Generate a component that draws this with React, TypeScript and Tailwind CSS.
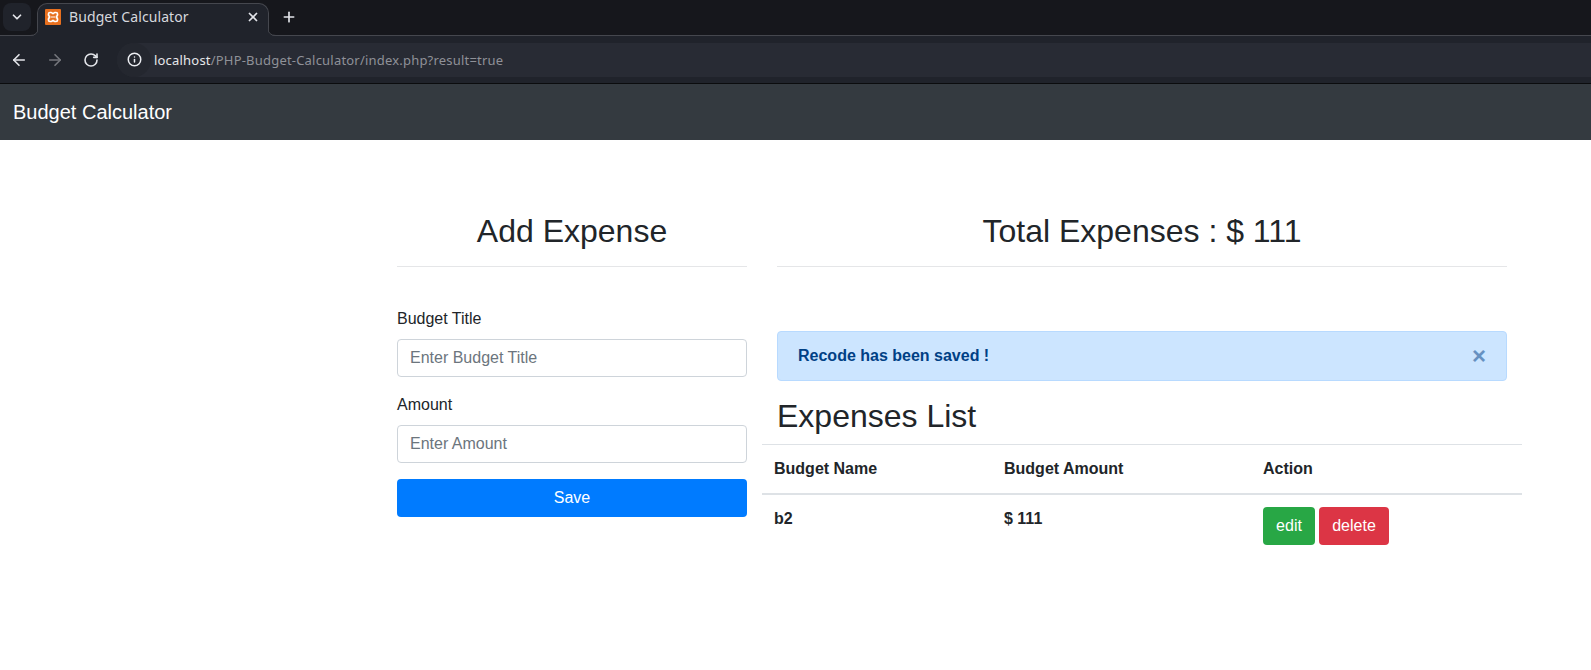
import { ArrowLeft, ArrowRight, ChevronDown, Info, Plus, RotateCw, X } from "lucide-react";

function XamppIcon() {
  return (
    <svg width="16" height="16" viewBox="0 0 16 16">
      <rect width="16" height="16" rx="1" fill="#e8701f" />
      <path
        d="M5 3.500h1.200c.7 0 1.100.5 1.300 1h1c.2-.5.6-1 1.300-1H11c.9 0 1.500.6 1.500 1.500v1c0 .7-.5 1.200-1 1.400v1.200c.5.2 1 .7 1 1.400v1c0 .9-.6 1.500-1.500 1.500H9.800c-.7 0-1.100-.5-1.300-1h-1c-.2.500-.6 1-1.300 1H5c-.9 0-1.500-.6-1.500-1.500v-1c0-.7.500-1.200 1-1.400V7.400c-.5-.2-1-.7-1-1.400V5c0-.9.600-1.500 1.500-1.500z"
        fill="none"
        stroke="#fff"
        strokeWidth="1.700"
      />
      <path d="M6 7.500h4v1H6z" fill="#fff" />
    </svg>
  );
}

// concave corners at the foot of the active tab
function TabFlare({ side }: { side: "left" | "right" }) {
  return (
    <svg
      width="8"
      height="8"
      viewBox="0 0 8 8"
      className={side === "left" ? "absolute -left-[8px] bottom-0 -scale-x-100" : "absolute -right-[8px] bottom-0"}
    >
      <path d="M0 0Q0 8 8 8H0z" fill="#20232b" />
      <path d="M0 0Q0 7.500 8 7.500" fill="none" stroke="#45474e" />
    </svg>
  );
}

function BrowserChrome() {
  return (
    <div className="font-['Noto_Sans',sans-serif]">
      <div className="flex h-[36px] items-start border-b border-[#45474e] bg-[#16171c] pl-[3px] pt-[3px]">
        <div className="mr-[6px] flex h-[28px] w-[28px] items-center justify-center rounded-lg bg-[#20232b] text-[#e3e5ea]">
          <ChevronDown size={14} strokeWidth={3} />
        </div>
        <div className="relative flex h-[33px] w-[232px] items-center rounded-t-[10px] border border-b-0 border-[#45474e] bg-[#20232b] pb-[6px] pl-[7px] pr-[8px]">
          <TabFlare side="left" />
          <XamppIcon />
          <span className="ml-[8px] flex-1 text-[14px] tracking-[0.1px] text-[#d6d8dd]">Budget Calculator</span>
          <X size={14} strokeWidth={3} className="text-[#e3e5ea]" />
          <TabFlare side="right" />
        </div>
        <div className="ml-[12px] flex h-[28px] w-[16px] items-center justify-center text-[#e3e5ea]">
          <Plus size={16} strokeWidth={2.5} />
        </div>
      </div>
      <div className="flex h-[48px] items-center border-b border-[#0b0c0e] bg-[#20232b] pl-[10px]">
        <ArrowLeft size={18} strokeWidth={2.2} className="text-[#e3e5ea]" />
        <ArrowRight size={18} strokeWidth={2.2} className="ml-[18px] text-[#74767c]" />
        <RotateCw size={16} strokeWidth={2.4} className="ml-[19px] text-[#e3e5ea]" />
        <div className="ml-[18px] flex h-[34px] flex-1 items-center rounded-l-[17px] bg-[#282b34]">
          <div className="flex h-[34px] w-[34px] items-center justify-center rounded-full bg-[#24272f] text-[#eceef2]">
            <Info size={15} strokeWidth={2.4} />
          </div>
          <span className="ml-[3px] text-[13px] tracking-[0.2px] text-[#8f9198]">
            <span className="text-[#e6e7ea]">localhost</span>/PHP-Budget-Calculator/index.php?result=true
          </span>
        </div>
      </div>
    </div>
  );
}

export default function App() {
  return (
    <div className="min-h-[670px] bg-white font-['Liberation_Sans',sans-serif] text-[16px] leading-[24px] text-[#212529]">
      <BrowserChrome />

      <nav className="flex h-[56px] items-center bg-[#343a40] px-[13px]">
        <span className="text-[20px] leading-[30px] text-white">Budget Calculator</span>
      </nav>

      <div className="ml-[382px] flex w-[1140px] pt-[72px]">
        {/* Add expense form */}
        <div className="w-[380px] px-[15px]">
          <h2 className="mb-[16px] text-center text-[32px] leading-[38px] font-normal">Add Expense</h2>
          <div className="border-t border-[#e5e6e8]"></div>
          <div className="pt-[40px]">
            <label className="mb-[8px] block">Budget Title</label>
            <input
              className="block h-[38px] w-full rounded border border-[#ced4da] px-[12px] placeholder:text-[#6c757d]"
              placeholder="Enter Budget Title"
            />
            <label className="mb-[8px] mt-[16px] block">Amount</label>
            <input
              className="block h-[38px] w-full rounded border border-[#ced4da] px-[12px] placeholder:text-[#6c757d]"
              placeholder="Enter Amount"
            />
            <button className="mt-[16px] block h-[38px] w-full rounded bg-[#007bff] text-white">Save</button>
          </div>
        </div>

        {/* Expenses */}
        <div className="w-[760px] px-[15px]">
          <h2 className="mb-[16px] text-center text-[32px] leading-[38px] font-normal">Total Expenses : $ 111</h2>
          <div className="border-t border-[#e5e6e8]"></div>
          <div className="mt-[64px] flex h-[50px] items-center justify-between rounded border border-[#b8daff] bg-[#cce5ff] pl-[20px] pr-[20px] font-bold text-[#004085]">
            <span>Recode has been saved !</span>
            <span className="text-[24px] leading-[24px] opacity-50">×</span>
          </div>
          <h2 className="mt-[16px] mb-[9px] text-[32px] leading-[38px] font-normal">Expenses List</h2>
          <table className="-mx-[15px] w-[760px] table-fixed border-collapse text-left">
            <thead>
              <tr className="border-t border-b-2 border-t-[#dee2e6] border-b-[#dee2e6]">
                <th className="h-[49px] w-[230px] px-[12px] font-bold">Budget Name</th>
                <th className="w-[259px] px-[12px] font-bold">Budget Amount</th>
                <th className="px-[12px] font-bold">Action</th>
              </tr>
            </thead>
            <tbody>
              <tr>
                <td className="px-[12px] pt-[12px] pb-[12px] align-top font-bold">b2</td>
                <td className="px-[12px] pt-[12px] pb-[12px] align-top font-bold">$ 111</td>
                <td className="px-[12px] pt-[12px] pb-[12px] align-top">
                  <button className="h-[38px] w-[52px] rounded bg-[#28a745] text-white">edit</button>
                  <button className="ml-[4px] h-[38px] w-[70px] rounded bg-[#dc3545] text-white">delete</button>
                </td>
              </tr>
            </tbody>
          </table>
        </div>
      </div>
    </div>
  );
}
